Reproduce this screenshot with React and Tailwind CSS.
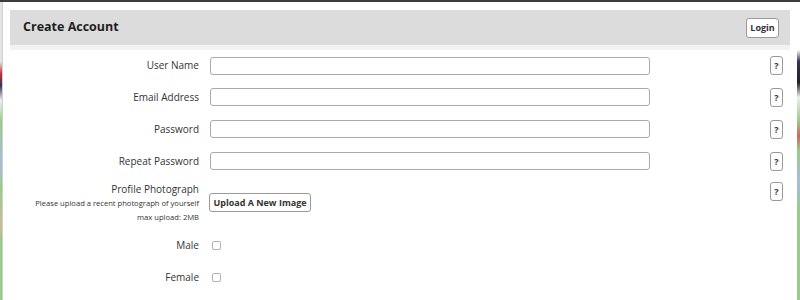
import React from "react";

const font = { fontFamily: "'Open Sans', 'Liberation Sans', sans-serif" };

function HelpButton() {
  return (
    <button className="w-[13px] h-[19px] border border-[#9a9a9a] rounded-[3px] bg-white text-[9px] font-bold text-[#333] leading-none flex items-center justify-center">
      ?
    </button>
  );
}

function FieldRow({ label, type = "text", first }) {
  return (
    <div className={`flex items-center ${first ? "h-[31px]" : "h-[32px]"}`}>
      <label className="ml-[7px] w-[189px] text-right text-[10px] text-[#333]">{label}</label>
      <input
        type={type}
        className="ml-[11px] w-[440px] h-[18px] border border-[#a9a9a9] rounded-[3px] bg-white outline-none"
      />
      <div className="ml-auto mr-[14px]">
        <HelpButton />
      </div>
    </div>
  );
}

function CheckRow({ label }) {
  return (
    <div className="flex items-center h-[32px]">
      <label className="ml-[7px] w-[189px] text-right text-[10px] text-[#333]">{label}</label>
      <span className="ml-[13px] w-[9px] h-[9px] border border-[#b0b0b0] rounded-[2px] bg-white" />
    </div>
  );
}

export default function App() {
  return (
    <div className="w-[800px] h-[300px] overflow-hidden flex flex-col" style={font}>
      <div className="h-[2px] bg-[#3c3c3c]" />
      <div className="flex flex-1">
        <div className="w-[2px] bg-[linear-gradient(#e4e4e4_0%,#e4e4e4_20%,#c33_24%,#335_28%,#eee_33%,#9c8_40%,#abd_55%,#9c8_62%,#cb9_75%,#9c8_80%)]" />
        <div className="flex-1 bg-white border-l border-[#d0d0d0]">
          <div className="mx-[7px] mt-[8px] border-b-[5px] border-[#f2f2f2]">
            <div className="h-[35px] bg-[#dcdcdc] flex items-center pl-[13px] pr-[11px]">
              <h1 className="text-[12.5px] font-bold text-[#1e1e1e]">Create Account</h1>
              <button className="ml-auto w-[33px] h-[20px] border border-[#9a9a9a] rounded-[3px] bg-white text-[9px] font-bold text-[#333] leading-none">
                Login
              </button>
            </div>
          </div>

          <FieldRow label="User Name" first />
          <FieldRow label="Email Address" />
          <FieldRow label="Password" type="password" />
          <FieldRow label="Repeat Password" type="password" />

          <div className="flex items-start pt-[5px] pb-[5px]">
            <div className="ml-[7px] w-[189px] text-right text-[#333]">
              <div className="text-[10px] leading-[14px]">Profile Photograph</div>
              <div className="text-[7.6px] leading-[14px]">Please upload a recent photograph of yourself</div>
              <div className="text-[7.6px] leading-[14px]">max upload: 2MB</div>
            </div>
            <button className="ml-[10px] mt-[11px] w-[102px] h-[19px] border border-[#9a9a9a] rounded-[3px] bg-white text-[9px] font-bold text-[#333] leading-none whitespace-nowrap">
              Upload A New Image
            </button>
            <div className="ml-auto mr-[14px]">
              <HelpButton />
            </div>
          </div>

          <CheckRow label="Male" />
          <CheckRow label="Female" />
        </div>
        <div className="w-[3px] bg-[linear-gradient(#fff_0%,#fff_16%,#335_20%,#222_27%,#eee_32%,#9c8_40%,#c66_45%,#9c8_50%,#abd_60%,#9c8_70%)]" />
      </div>
    </div>
  );
}
